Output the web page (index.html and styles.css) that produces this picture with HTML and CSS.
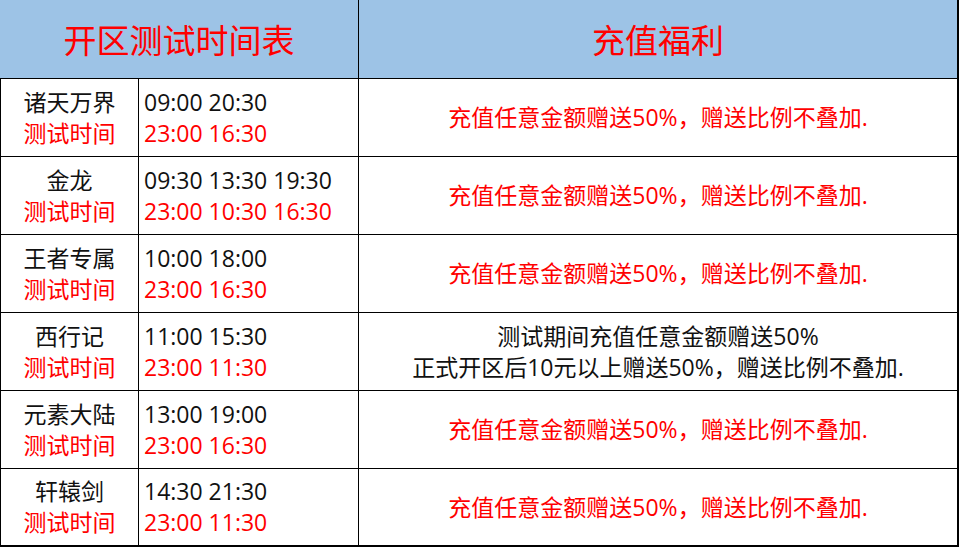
FILE: index.html
```html
<!DOCTYPE html>
<html lang="zh-CN">
<head>
<meta charset="utf-8">
<title>开区测试时间表</title>
<link rel="stylesheet" href="styles.css">
</head>
<body>
<div class="sheet">
  <div class="cell head hd1">开区测试时间表</div>
  <div class="cell head hd2">充值福利</div>

  <div class="cell c1"><div class="stack"><span class="name">诸天万界</span><span class="red">测试时间</span></div></div>
  <div class="cell c2"><div class="stack"><span>09:00 20:30</span><span class="red">23:00 16:30</span></div></div>
  <div class="cell c3"><span class="red">充值任意金额赠送50%，赠送比例不叠加.</span></div>

  <div class="cell c1"><div class="stack"><span class="name">金龙</span><span class="red">测试时间</span></div></div>
  <div class="cell c2"><div class="stack"><span>09:30 13:30 19:30</span><span class="red">23:00 10:30 16:30</span></div></div>
  <div class="cell c3"><span class="red">充值任意金额赠送50%，赠送比例不叠加.</span></div>

  <div class="cell c1"><div class="stack"><span class="name">王者专属</span><span class="red">测试时间</span></div></div>
  <div class="cell c2"><div class="stack"><span>10:00 18:00</span><span class="red">23:00 16:30</span></div></div>
  <div class="cell c3"><span class="red">充值任意金额赠送50%，赠送比例不叠加.</span></div>

  <div class="cell c1"><div class="stack"><span class="name">西行记</span><span class="red">测试时间</span></div></div>
  <div class="cell c2"><div class="stack"><span>11:00 15:30</span><span class="red">23:00 11:30</span></div></div>
  <div class="cell c3"><div class="stack center"><span>测试期间充值任意金额赠送50%</span><span>正式开区后10元以上赠送50%，赠送比例不叠加.</span></div></div>

  <div class="cell c1"><div class="stack"><span class="name">元素大陆</span><span class="red">测试时间</span></div></div>
  <div class="cell c2"><div class="stack"><span>13:00 19:00</span><span class="red">23:00 16:30</span></div></div>
  <div class="cell c3"><span class="red">充值任意金额赠送50%，赠送比例不叠加.</span></div>

  <div class="cell c1 last"><div class="stack"><span class="name">轩辕剑</span><span class="red">测试时间</span></div></div>
  <div class="cell c2 last"><div class="stack"><span>14:30 21:30</span><span class="red">23:00 11:30</span></div></div>
  <div class="cell c3 last"><span class="red">充值任意金额赠送50%，赠送比例不叠加.</span></div>
</div>
</body>
</html>
```
FILE: styles.css
```css
html, body {
  margin: 0;
  padding: 0;
  background: #ffffff;
}

.sheet {
  display: grid;
  grid-template-columns: 139px 220px 600px;
  width: 959px;
  font-family: "Open Sans", "Noto Sans CJK SC", sans-serif;
  font-size: 23px;
  color: #111111;
}

.cell {
  box-sizing: border-box;
  height: 78px;
  border-bottom: 1px solid #000;
  border-right: 1px solid #000;
  display: flex;
  align-items: center;
  line-height: 31px;
  white-space: nowrap;
}

.head {
  height: 79px;
  background: #9dc3e6;
  color: #ff0000;
  font-size: 33px;
  justify-content: center;
  padding-top: 2px;
}

.hd1 {
  grid-column: 1 / 3;
}

.hd2 {
  border-right-width: 2px;
}

.c1 {
  border-left: 1px solid #000;
  justify-content: center;
}

.c2 {
  padding-left: 5px;
}

.c3 {
  justify-content: center;
  border-right-width: 2px;
}

.last {
  border-bottom-width: 2px;
}

.stack {
  display: flex;
  flex-direction: column;
  align-items: center;
}

.c2 .stack {
  align-items: flex-start;
}

.red {
  color: #ff0000;
}
```
